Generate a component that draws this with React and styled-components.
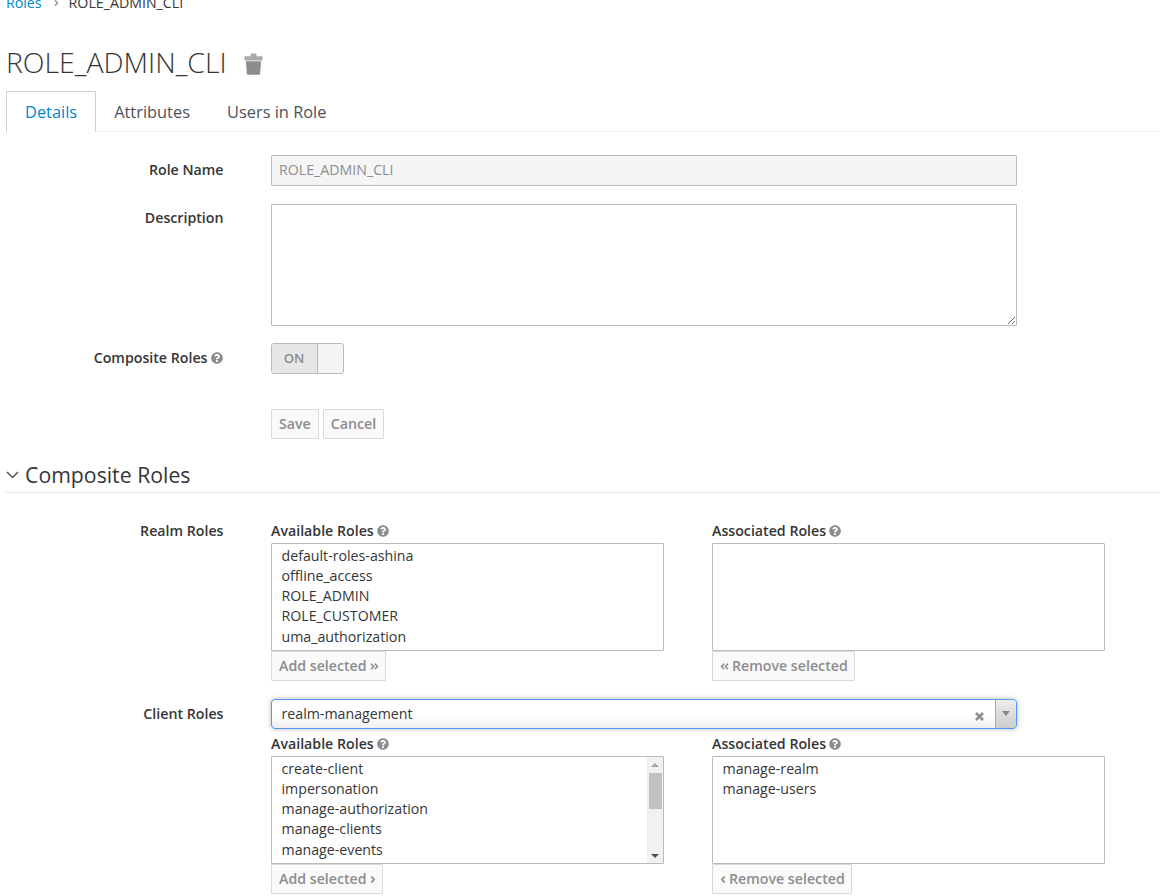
import React from 'react'
import styled, { createGlobalStyle } from 'styled-components'
import { FaQuestionCircle, FaAngleDoubleRight, FaAngleDoubleLeft, FaAngleRight, FaAngleLeft } from 'react-icons/fa'

const GlobalStyle = createGlobalStyle`
  html, body {
    margin: 0;
    height: 896px;
    overflow: hidden;
    background: #fff;
  }
  body {
    font-family: "Open Sans", "Liberation Sans", sans-serif;
    font-size: 14.2px;
    color: #363636;
  }
`

const Page = styled.div`
  width: 1160px;
  margin-top: -7px;
  padding-left: 6px;
  box-sizing: border-box;
`

const Breadcrumb = styled.nav`
  display: flex;
  align-items: center;
  height: 20px;
  font-size: 14.2px;
  line-height: 20px;
`

const Crumb = styled.a`
  color: #0088ce;
`

const CrumbSep = styled(FaAngleRight)`
  width: 9px;
  height: 10px;
  margin: 0 8px 0 10px;
  color: #9c9c9c;
`

const TitleRow = styled.div`
  display: flex;
  align-items: center;
  height: 40px;
  margin-top: 29px;
`

const Title = styled.h1`
  margin: 0;
  font-size: 28.4px;
  font-weight: 300;
  line-height: 40px;
  color: #363636;
`

const TrashSvg = styled.svg`
  width: 19px;
  height: 22px;
  margin: 3px 0 0 17px;
`

const Tabs = styled.div`
  display: flex;
  height: 41px;
  margin-top: 9px;
  border-bottom: 1px solid #ededed;
  box-sizing: border-box;
`

const Tab = styled.a`
  display: flex;
  align-items: center;
  height: ${p => (p.$active ? '41px' : '40px')};
  padding: 0 18px ${p => (p.$active ? '1px' : '0')} ${p => (p.$active ? '18px' : '17px')};
  box-sizing: border-box;
  font-size: 16.4px;
  color: ${p => (p.$active ? '#0088ce' : '#4d5258')};
  background: ${p => (p.$active ? '#fff' : 'transparent')};
  border: 1px solid ${p => (p.$active ? '#d1d1d1' : 'transparent')};
  border-bottom: 0;
`

const FormRow = styled.div`
  display: grid;
  grid-template-columns: 217.5px 746px;
  column-gap: 47.5px;
  margin-top: ${p => p.$top || 18}px;
`

const Label = styled.label`
  font-size: 14.2px;
  font-weight: 600;
  line-height: 20px;
  text-align: right;
  padding-top: ${p => p.$pad ?? 5}px;
  padding-right: ${p => p.$right || 0}px;
  color: #363636;
`

const HelpIcon = styled(FaQuestionCircle)`
  width: 12px;
  height: 12px;
  margin-left: 3px;
  color: #8b8d8f;
  vertical-align: -1px;
`

const TextInput = styled.input`
  display: block;
  width: 746px;
  height: 31px;
  padding: 0 7px 2px;
  box-sizing: border-box;
  font: 14.2px "Open Sans", sans-serif;
  color: #8b8d8f;
  background: #f5f5f5;
  border: 1px solid #bababa;
  border-radius: 1px;
  outline: none;
`

const TextArea = styled.textarea`
  display: block;
  width: 746px;
  height: 122px;
  padding: 4px 7px;
  box-sizing: border-box;
  font: 14.2px "Open Sans", sans-serif;
  background: #fff;
  border: 1px solid #bababa;
  border-radius: 1px;
  outline: none;
`

const Toggle = styled.div`
  display: flex;
  width: 73px;
  height: 31px;
  box-sizing: border-box;
  background: #f5f5f5;
  border: 1px solid #bababa;
  border-radius: 3px;
  overflow: hidden;
`

const ToggleOn = styled.span`
  display: flex;
  align-items: center;
  justify-content: center;
  width: 46px;
  padding: 0 1px 1px 0;
  box-sizing: border-box;
  font-size: 13.2px;
  font-weight: 600;
  color: #8b8d8f;
  background: #e6e6e6;
  border-right: 1px solid #bababa;
`

const ButtonRow = styled.div`
  display: flex;
  gap: 4px;
`

const Button = styled.button`
  display: inline-flex;
  align-items: center;
  gap: 3px;
  height: 30px;
  padding: 0 ${p => (p.$tight ? 6 : 7)}px 2px 7px;
  box-sizing: border-box;
  font: 600 14.2px "Open Sans", sans-serif;
  color: #8b8d8f;
  background: #fafafa;
  border: 1px solid #d9d9d9;
  border-radius: 1px;
`

const ButtonGlyph = styled.span`
  display: inline-flex;
  margin-top: 2px;
  svg {
    width: ${p => p.$size || 9}px;
    height: 11px;
  }
`

const SectionHead = styled.div`
  display: flex;
  align-items: center;
  height: 35px;
  margin-top: 18px;
  border-bottom: 1px solid #e6e6e6;
  box-sizing: content-box;
`

const SectionTitle = styled.h2`
  margin: 0 0 0 6px;
  font-size: 21.25px;
  font-weight: 400;
  line-height: 30px;
  color: #363636;
`

const ChevronSvg = styled.svg`
  width: 13px;
  height: 8px;
  margin-top: 1px;
`

const RolesRow = styled.div`
  display: grid;
  grid-template-columns: 217.5px 393px 393px;
  column-gap: 47.5px;
  margin-top: ${p => p.$top || 28}px;
`

const RoleColumns = styled.div`
  grid-column: 2 / 4;
  display: grid;
  grid-template-columns: 393px 393px;
  column-gap: 48px;
`

const RoleColumn = styled.div`
  display: flex;
  flex-direction: column;
  align-items: flex-start;
`

const ColumnTitle = styled.div`
  font-size: 14.2px;
  font-weight: 600;
  line-height: 20px;
  height: 22px;
  color: #363636;
`

const ListBox = styled.div`
  display: flex;
  width: 393px;
  height: 108px;
  box-sizing: border-box;
  background: #fff;
  border: 1px solid #bababa;
  border-radius: 1px;
  overflow: hidden;
`

const ListItems = styled.ul`
  flex: 1;
  margin: 0;
  padding: 1.6px 0 0 9.5px;
  list-style: none;
`

const ListItem = styled.li`
  height: 20.25px;
  font-size: 14.2px;
  line-height: 20px;
  white-space: nowrap;
  color: #363636;
`

const Scrollbar = styled.div`
  display: flex;
  flex-direction: column;
  align-items: center;
  width: 16px;
  background: #f1f1f1;
`

const ScrollArrow = styled.span`
  flex: none;
  width: 0;
  height: 0;
  margin: 6px 0 5px;
  border-left: 4px solid transparent;
  border-right: 4px solid transparent;
  ${p => (p.$up
    ? 'border-bottom: 4px solid #a3a3a3;'
    : 'border-top: 4px solid #505050; margin-top: auto;')}
`

const ScrollThumb = styled.div`
  width: 13px;
  height: 36px;
  margin-top: 1px;
  background: #c1c1c1;
`

const Select2 = styled.div`
  display: flex;
  align-items: center;
  height: 30px;
  box-sizing: border-box;
  padding-left: 9.5px;
  background: linear-gradient(to bottom, #fff 0%, #fff 55%, #eeeeee 100%);
  border: 1px solid #5897fb;
  border-radius: 4px;
  box-shadow: 0 0 5px rgba(0, 0, 0, 0.3);
`

const SelectValue = styled.span`
  flex: 1;
  padding-bottom: 2px;
  font-size: 14.2px;
  color: #363636;
`

const ClearSvg = styled.svg`
  width: 9px;
  height: 9px;
  margin: 5px 11px 0 0;
`

const SelectArrow = styled.span`
  display: flex;
  align-items: center;
  justify-content: center;
  width: 20px;
  height: 100%;
  background: linear-gradient(to bottom, #eeeeee, #cccccc);
  border-left: 1px solid #aaaaaa;
  border-radius: 0 4px 4px 0;
  &::after {
    content: "";
    border-left: 4px solid transparent;
    border-right: 4px solid transparent;
    border-top: 5px solid #888;
    margin-top: -2px;
  }
`

const ClientSelectRow = styled.div`
  display: grid;
  grid-template-columns: 217.5px 746px;
  column-gap: 47.5px;
  margin-top: 18px;
`

const Help = () => <HelpIcon />

const TrashIcon = () => (
  <TrashSvg viewBox="0 0 19 22">
    <path d="M6.2 3.2L6.9.6h5.2l.7 2.6h5.7v4.4H.5V3.2z" fill="#a8aaac" />
    <path d="M1.9 8.2h15.2l-1 12c-.1 1-.7 1.6-1.6 1.6h-10.1c-.9 0-1.5-.6-1.6-1.6z" fill="#8b8d8f" />
  </TrashSvg>
)

const Chevron = () => (
  <ChevronSvg viewBox="0 0 13 8">
    <path d="M1 1l5.5 5.5L12 1" fill="none" stroke="#4d5258" strokeWidth="1.5" />
  </ChevronSvg>
)

const ClearIcon = () => (
  <ClearSvg viewBox="0 0 9 9">
    <path d="M1 1l7 7M8 1L1 8" fill="none" stroke="#8b8d8f" strokeWidth="2.6" />
  </ClearSvg>
)

const RoleList = ({ items, scroll }) => (
  <ListBox>
    <ListItems>
      {items.map(item => <ListItem key={item}>{item}</ListItem>)}
    </ListItems>
    {scroll && (
      <Scrollbar>
        <ScrollArrow $up />
        <ScrollThumb />
        <ScrollArrow />
      </Scrollbar>
    )}
  </ListBox>
)

const App = () => {
  return (
    <>
      <GlobalStyle />
      <Page>
        <Breadcrumb>
          <Crumb>Roles</Crumb>
          <CrumbSep />
          <span>ROLE_ADMIN_CLI</span>
        </Breadcrumb>

        <TitleRow>
          <Title>ROLE_ADMIN_CLI</Title>
          <TrashIcon />
        </TitleRow>

        <Tabs>
          <Tab $active>Details</Tab>
          <Tab>Attributes</Tab>
          <Tab>Users in Role</Tab>
        </Tabs>

        <FormRow $top={23}>
          <Label>Role Name</Label>
          <TextInput disabled value="ROLE_ADMIN_CLI" readOnly />
        </FormRow>

        <FormRow>
          <Label $pad={4}>Description</Label>
          <TextArea />
        </FormRow>

        <FormRow $top={17}>
          <Label $pad={5} $right={1}>Composite Roles<Help /></Label>
          <Toggle>
            <ToggleOn>ON</ToggleOn>
          </Toggle>
        </FormRow>

        <FormRow $top={35}>
          <span />
          <ButtonRow>
            <Button>Save</Button>
            <Button>Cancel</Button>
          </ButtonRow>
        </FormRow>

        <SectionHead>
          <Chevron />
          <SectionTitle>Composite Roles</SectionTitle>
        </SectionHead>

        <RolesRow>
          <Label $pad={0}>Realm Roles</Label>
          <RoleColumns>
            <RoleColumn>
              <ColumnTitle>Available Roles<Help /></ColumnTitle>
              <RoleList items={['default-roles-ashina', 'offline_access', 'ROLE_ADMIN', 'ROLE_CUSTOMER', 'uma_authorization']} />
              <Button $tight>Add selected<ButtonGlyph><FaAngleDoubleRight /></ButtonGlyph></Button>
            </RoleColumn>
            <RoleColumn>
              <ColumnTitle>Associated Roles<Help /></ColumnTitle>
              <RoleList items={[]} />
              <Button $tight><ButtonGlyph><FaAngleDoubleLeft /></ButtonGlyph>Remove selected</Button>
            </RoleColumn>
          </RoleColumns>
        </RolesRow>

        <ClientSelectRow>
          <Label>Client Roles</Label>
          <Select2>
            <SelectValue>realm-management</SelectValue>
            <ClearIcon />
            <SelectArrow />
          </Select2>
        </ClientSelectRow>

        <RolesRow $top={5}>
          <span />
          <RoleColumns>
            <RoleColumn>
              <ColumnTitle>Available Roles<Help /></ColumnTitle>
              <RoleList scroll items={['create-client', 'impersonation', 'manage-authorization', 'manage-clients', 'manage-events']} />
              <Button $tight>Add selected<ButtonGlyph $size={6}><FaAngleRight /></ButtonGlyph></Button>
            </RoleColumn>
            <RoleColumn>
              <ColumnTitle>Associated Roles<Help /></ColumnTitle>
              <RoleList items={['manage-realm', 'manage-users']} />
              <Button $tight><ButtonGlyph $size={6}><FaAngleLeft /></ButtonGlyph>Remove selected</Button>
            </RoleColumn>
          </RoleColumns>
        </RolesRow>
      </Page>
    </>
  )
}

export default App
